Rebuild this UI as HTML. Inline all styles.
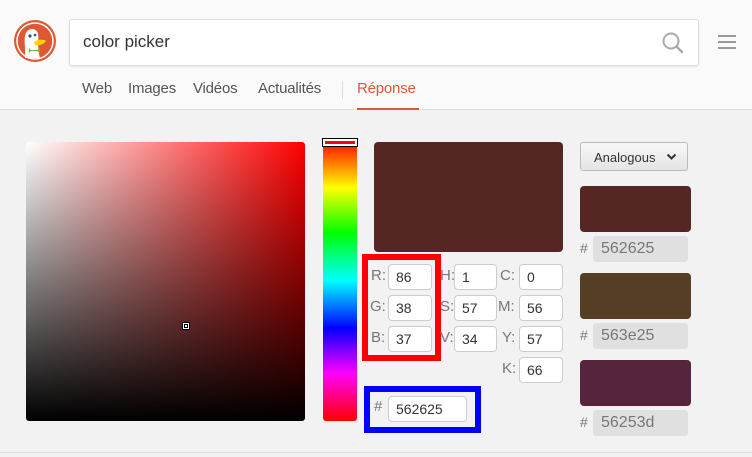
<!DOCTYPE html>
<html><head><meta charset="utf-8"><style>
*{margin:0;padding:0;box-sizing:border-box}
body{width:752px;height:457px;background:#f2f2f2;font-family:"Liberation Sans",sans-serif;position:relative;overflow:hidden}
.hdr{position:absolute;left:0;top:0;width:752px;height:110px;background:#fafafa;border-bottom:1px solid #ddd}
.abs{position:absolute}
.search{left:69px;top:19px;width:630px;height:47px;background:#fff;border:1px solid #ddd;border-radius:3px;box-shadow:0 1px 2px rgba(0,0,0,.08);font-size:17px;color:#333;padding:12px 0 0 13px}
.tab{top:80px;font-size:15px;color:#555;letter-spacing:-0.2px}
.inp{position:absolute;background:#fff;border:1px solid #ccc;border-radius:4px;font-size:14px;color:#333;padding:4px 0 0 7px;height:26px}
.lbl{position:absolute;font-size:15px;color:#777}
.hex{position:absolute;left:593px;width:95px;height:26px;background:#e0e0e0;border-radius:3px;font-size:16px;color:#777;padding:4px 0 0 8px}
.hs{position:absolute;left:580px;font-size:14px;color:#777}
.sw{position:absolute;left:580px;width:111px;height:46px;border-radius:4px}
</style></head><body>
<div class="hdr"></div>
<svg class="abs" style="left:13px;top:19px" width="44" height="44" viewBox="0 0 44 44">
<circle cx="22" cy="22" r="21" fill="#de5833"/><circle cx="22" cy="22" r="18" fill="none" stroke="#fff" stroke-width="1.5"/>
<path d="M12 39 C13 30 10 20 13 14 C16 8 24 9 25 15 C26 21 24 30 27 39 Z" fill="#fff"/>
<circle cx="17" cy="17" r="1.6" fill="#2d4f8e"/><circle cx="22" cy="16" r="1.3" fill="#2d4f8e"/>
<path d="M21 23 C25 20 31 20 33 22 C30 26 25 27 22 26Z" fill="#fdd20a"/>
<path d="M18 31 L24 31 L27 29 L27 34 L24 32 L18 32 L16 34 L16 29Z" fill="#65bc46"/>
</svg>
<div class="abs search">color picker</div>
<svg class="abs" style="left:661px;top:31px" width="24" height="24" viewBox="0 0 24 24"><circle cx="10" cy="10" r="7.5" fill="none" stroke="#aaa" stroke-width="2"/><path d="M15.5 15.5 L21 21" stroke="#aaa" stroke-width="2.5" stroke-linecap="round"/></svg>
<div class="abs" style="left:718px;top:35px;width:18px;height:14px;border-top:2px solid #999;border-bottom:2px solid #999"><div style="margin-top:4px;height:2px;background:#999"></div></div>
<div class="abs tab" style="left:82px">Web</div>
<div class="abs tab" style="left:128px">Images</div>
<div class="abs tab" style="left:193px">Vidéos</div>
<div class="abs tab" style="left:258px">Actualités</div>
<div class="abs" style="left:342px;top:81px;width:1px;height:18px;background:#ddd"></div>
<div class="abs tab" style="left:357px;color:#de5833">Réponse</div>
<div class="abs" style="left:357px;top:108px;width:62px;height:2px;background:#de5833"></div>

<div class="abs" style="left:26px;top:142px;width:279px;height:279px;border-radius:3px;background:linear-gradient(to bottom,rgba(0,0,0,0),#000),linear-gradient(to right,#fff,#f00)"></div>
<div class="abs" style="left:182px;top:322px;width:8px;height:8px;border:1px solid #000;background:#fff"><div style="margin:1px;width:4px;height:4px;border:1px solid #000;background:transparent"></div></div>
<div class="abs" style="left:323px;top:140px;width:34px;height:281px;border-radius:3px;background:linear-gradient(to bottom,#f00 0%,#ff0 17%,#0f0 33%,#0ff 50%,#00f 67%,#f0f 83%,#f00 100%)"></div>
<div class="abs" style="left:322px;top:138px;width:36px;height:9px;border:1px solid #000;background:#f00;box-shadow:inset 0 0 0 2px #fff"></div>

<div class="abs" style="left:374px;top:142px;width:189px;height:110px;background:#562625;border-radius:4px"></div>
<div class="abs" style="left:362px;top:254px;width:79px;height:107px;border:6px solid #f00"></div>
<div class="abs" style="left:364px;top:386px;width:117px;height:47px;border:6px solid #00f"></div>

<div class="lbl" style="left:371px;top:267px">R:</div><div class="inp" style="left:388px;top:264px;width:44px">86</div>
<div class="lbl" style="left:370px;top:298px">G:</div><div class="inp" style="left:388px;top:295px;width:44px">38</div>
<div class="lbl" style="left:371px;top:329px">B:</div><div class="inp" style="left:388px;top:326px;width:44px">37</div>
<div class="lbl" style="left:440px;top:267px">H:</div><div class="inp" style="left:454px;top:264px;width:43px">1</div>
<div class="lbl" style="left:440px;top:298px">S:</div><div class="inp" style="left:454px;top:295px;width:43px">57</div>
<div class="lbl" style="left:440px;top:329px">V:</div><div class="inp" style="left:454px;top:326px;width:43px">34</div>
<div class="lbl" style="left:500px;top:267px">C:</div><div class="inp" style="left:519px;top:264px;width:44px">0</div>
<div class="lbl" style="left:498px;top:298px">M:</div><div class="inp" style="left:519px;top:295px;width:44px">56</div>
<div class="lbl" style="left:502px;top:329px">Y:</div><div class="inp" style="left:519px;top:326px;width:44px">57</div>
<div class="lbl" style="left:502px;top:360px">K:</div><div class="inp" style="left:519px;top:357px;width:44px">66</div>
<div class="lbl" style="left:374px;top:398px">#</div><div class="inp" style="left:388px;top:396px;width:79px">562625</div>

<div class="abs" style="left:580px;top:142px;width:108px;height:29px;border:1px solid #bbb;border-radius:3px;background:linear-gradient(#f8f8f8,#e4e4e4);font-size:13px;color:#333;padding:7px 0 0 13px">Analogous
<svg style="position:absolute;left:85px;top:10px" width="11" height="8" viewBox="0 0 11 8"><path d="M1.5 1.5 L5.5 5.5 L9.5 1.5" fill="none" stroke="#333" stroke-width="2"/></svg></div>
<div class="sw" style="top:186px;background:#562625"></div>
<div class="hs" style="top:240px">#</div><div class="hex" style="top:236px">562625</div>
<div class="sw" style="top:273px;background:#563e25"></div>
<div class="hs" style="top:327px">#</div><div class="hex" style="top:323px">563e25</div>
<div class="sw" style="top:360px;background:#56253d"></div>
<div class="hs" style="top:414px">#</div><div class="hex" style="top:410px">56253d</div>
<div class="abs" style="left:0;top:452px;width:752px;height:1px;background:#ddd"></div>
</body></html>
